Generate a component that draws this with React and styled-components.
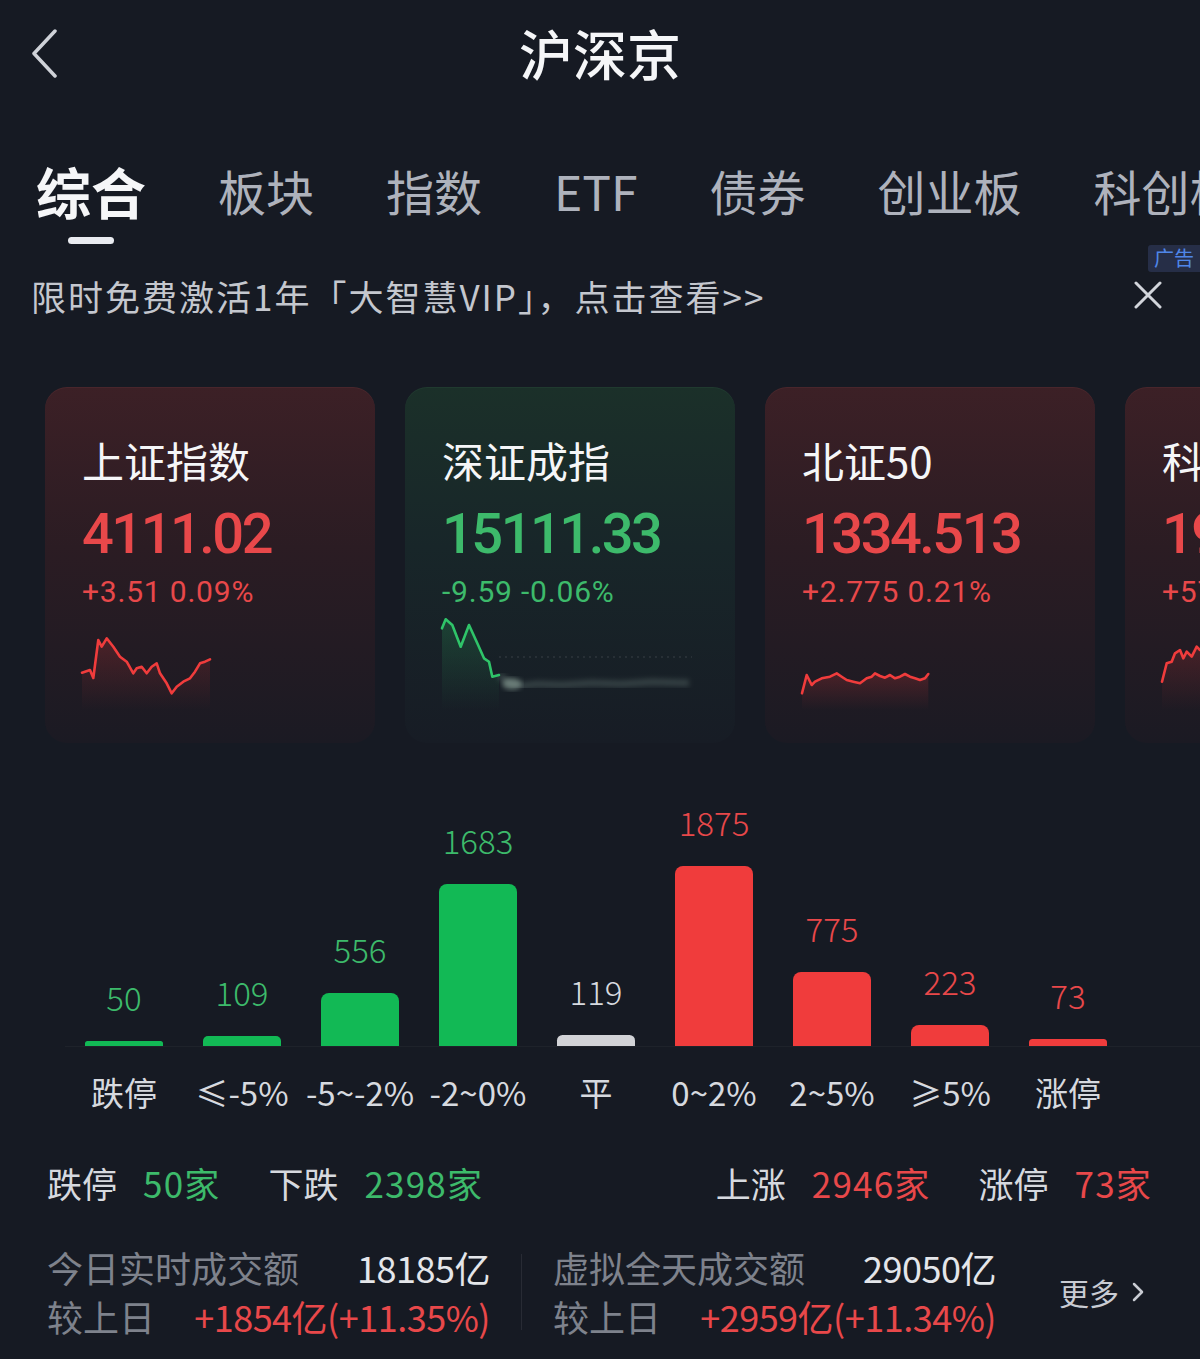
import React from 'react';
import styled, { createGlobalStyle } from 'styled-components';

const COLORS = {
    bg: '#161a23',
    white: '#f5f6f8',
    text: '#d6d9df',
    tab: '#aeb2bc',
    gray: '#7e828c',
    red: '#f03c3c',
    redText: '#e8484a',
    green: '#12b955',
    greenText: '#3dba6b',
    flat: '#d2d3d7',
};

const FONT = `"Noto Sans CJK SC", "Noto Sans", sans-serif`;
const NUM_FONT = `Roboto, "Noto Sans CJK SC", sans-serif`;

const TABS = ['综合', '板块', '指数', 'ETF', '债券', '创业板', '科创板'];

const INDEXES = [
    {
        id: 'sh',
        name: '上证指数',
        value: '4111.02',
        change: '+3.51 0.09%',
        tone: 'up',
        points: [[0,62.7],[8,60],[11.3,68],[16.3,30],[19.7,36.7],[24.7,28.3],[31.3,36.7],[38,46.7],[44.7,51.7],[51.3,63.3],[54.7,58.3],[59.7,56.7],[64.7,63.3],[69.7,56.7],[74.7,53.3],[78,63.3],[84.7,73.3],[89.7,83.3],[94.7,76.7],[101.3,71.7],[108,68.3],[113,61.7],[118,53.3],[123,51.7],[128,49.3]],
    },
    {
        id: 'sz',
        name: '深证成指',
        value: '15111.33',
        change: '-9.59 -0.06%',
        tone: 'down',
        points: [[0,18.3],[3.7,9.3],[10.3,15],[18.7,36.7],[27,15],[35.3,33.3],[42,48.3],[47,51.7],[50.3,66.7],[57,65]],
        tail: [[57,65],[67,73],[80,76],[95,74],[120,75],[150,73],[180,74],[210,72],[247,73]],
    },
    {
        id: 'bj',
        name: '北证50',
        value: '1334.513',
        change: '+2.775 0.21%',
        tone: 'up',
        points: [[0,83.3],[4.7,65],[9.7,75],[13,71.7],[19.7,68.3],[28,66.7],[34.7,63.3],[39.7,66.7],[44.7,70],[51.3,71.7],[58,73.3],[64.7,68.3],[69.7,66.7],[73,63.3],[78,66],[83,67.7],[88,65],[93,68.3],[98,66.7],[103,64],[108,66.7],[113,68.3],[118,70],[123,68.3],[126.3,64]],
    },
    {
        id: 'kc',
        name: '科创50',
        value: '1921.46',
        change: '+57.26 3.07%',
        tone: 'up',
        points: [[0,71.7],[4.7,53.3],[9.7,51.7],[13,43.3],[18,40],[21.3,48.3],[24.7,41.7],[29.7,46.7],[34.7,36.7],[38,40],[44,35],[50,42],[58,30],[66,38],[74,28],[82,36],[90,32],[100,40],[110,34],[120,38],[128,30]],
    },
];

const BARS = [
    { label: '跌停', value: 50, tone: 'down' },
    { label: '≤-5%', value: 109, tone: 'down' },
    { label: '-5~-2%', value: 556, tone: 'down' },
    { label: '-2~0%', value: 1683, tone: 'down' },
    { label: '平', value: 119, tone: 'flat' },
    { label: '0~2%', value: 1875, tone: 'up' },
    { label: '2~5%', value: 775, tone: 'up' },
    { label: '≥5%', value: 223, tone: 'up' },
    { label: '涨停', value: 73, tone: 'up' },
];

const toneText = (tone) =>
    tone === 'up' ? COLORS.redText : tone === 'down' ? COLORS.greenText : COLORS.text;
const toneBar = (tone) =>
    tone === 'up' ? COLORS.red : tone === 'down' ? COLORS.green : COLORS.flat;

const GlobalStyle = createGlobalStyle`
    * { box-sizing: border-box; }
    body {
        margin: 0;
        background: ${COLORS.bg};
        font-family: ${FONT};
        -webkit-font-smoothing: antialiased;
    }
`;

const Page = styled.div`
    width: 1200px;
    height: 1359px;
    overflow: hidden;
    background: ${COLORS.bg};
    color: ${COLORS.text};
`;

const Header = styled.header`
    height: 105px;
    display: grid;
    grid-template-columns: 120px 1fr 120px;
    align-items: center;
`;

const BackButton = styled.div`
    padding-left: 30px;
    display: flex;
    align-items: center;
`;

const Title = styled.h1`
    margin: 0;
    text-align: center;
    font-size: 54px;
    font-weight: 500;
    line-height: 105px;
    color: ${COLORS.white};
`;

const TabBar = styled.nav`
    height: 140px;
    padding: 55px 0 0 36px;
    display: flex;
    gap: 72px;
    white-space: nowrap;
    overflow: hidden;
`;

const Tab = styled.div`
    display: flex;
    flex-direction: column;
    align-items: center;
    flex-shrink: 0;
    font-size: ${(p) => (p.$active ? '55px' : '48px')};
    font-weight: ${(p) => (p.$active ? 700 : 400)};
    color: ${(p) => (p.$active ? COLORS.white : COLORS.tab)};
    line-height: 60px;
`;

const Indicator = styled.span`
    width: 46px;
    height: 7px;
    margin-top: 17px;
    border-radius: 4px;
    background: ${(p) => (p.$visible ? '#e9ebf0' : 'transparent')};
`;

const Banner = styled.div`
    position: relative;
    height: 100px;
    padding: 0 38px 0 31px;
    display: flex;
    align-items: center;
    justify-content: space-between;
`;

const BannerText = styled.span`
    font-size: 35px;
    color: #c4c7ce;
    letter-spacing: 2px;
    white-space: nowrap;
`;

const AdTag = styled.span`
    position: absolute;
    top: 0;
    right: 0;
    padding: 1px 6px 2px;
    font-size: 20px;
    line-height: 24px;
    color: #4f86e8;
    background: #262e47;
    border-radius: 3px 0 0 3px;
`;

const CardRow = styled.div`
    margin-top: 42px;
    padding-left: 45px;
    display: flex;
    gap: 30px;
    overflow: hidden;
`;

const Card = styled.div`
    flex-shrink: 0;
    width: 330px;
    height: 356px;
    padding: 48px 37px 0;
    border-radius: 22px;
    background: ${(p) =>
        p.$tone === 'down'
            ? 'linear-gradient(180deg, #1b3029 0%, #182629 45%, #171c25 100%)'
            : 'linear-gradient(180deg, #3c2026 0%, #2b1c23 45%, #1b1a23 100%)'};
    box-shadow: inset 0 1px 0 ${(p) =>
        p.$tone === 'down' ? 'rgba(120, 220, 160, 0.06)' : 'rgba(255, 130, 130, 0.07)'};
`;

const CardName = styled.div`
    font-size: 42px;
    line-height: 50px;
    color: ${COLORS.white};
    white-space: nowrap;
`;

const CardValue = styled.div`
    margin-top: 16px;
    font-family: ${NUM_FONT};
    font-size: 56px;
    font-weight: 500;
    letter-spacing: -2.5px;
    line-height: 66px;
    color: ${(p) => (p.$tone === 'down' ? COLORS.greenText : COLORS.redText)};
    white-space: nowrap;
`;

const CardChange = styled.div`
    margin-top: 7px;
    font-family: ${NUM_FONT};
    font-size: 30px;
    letter-spacing: 0.8px;
    line-height: 36px;
    color: ${(p) => (p.$tone === 'down' ? COLORS.greenText : COLORS.redText)};
    white-space: nowrap;
`;

const Spark = styled.svg`
    display: block;
    overflow: visible;
`;

const Chart = styled.section`
    padding-left: 65px;
`;

const BarsRow = styled.div`
    height: 304px;
    display: flex;
    align-items: flex-end;
    border-bottom: 1px solid rgba(255, 255, 255, 0.035);
`;

const BarColumn = styled.div`
    width: 118px;
    display: flex;
    flex-direction: column;
    align-items: center;
`;

const BarValue = styled.div`
    margin-bottom: 24px;
    font-size: 33px;
    line-height: 40px;
    font-weight: 300;
    color: ${(p) => toneText(p.$tone)};
`;

const Bar = styled.div`
    width: 78px;
    background: ${(p) => toneBar(p.$tone)};
`;

const LabelsRow = styled.div`
    margin-top: 22px;
    display: flex;
`;

const BarLabel = styled.div`
    width: 118px;
    text-align: center;
    font-size: 33px;
    line-height: 46px;
    color: ${COLORS.text};
    white-space: nowrap;
`;

const Summary = styled.div`
    margin-top: 43px;
    padding: 0 48px 0 47px;
    display: flex;
    justify-content: space-between;
    font-size: 35px;
    line-height: 50px;
`;

const SummaryGroup = styled.div`
    display: flex;
    gap: 48px;
`;

const SummaryItem = styled.div`
    display: flex;
    gap: 26px;
`;

const SummaryLabel = styled.span`
    color: ${COLORS.text};
`;

const SummaryValue = styled.span`
    color: ${(p) => toneText(p.$tone)};
    letter-spacing: 1.2px;
`;

const Stats = styled.div`
    margin-top: 35px;
    padding-left: 47px;
    display: flex;
    align-items: center;
`;

const StatBlock = styled.div`
    width: 443px;
    display: grid;
    grid-template-rows: 49px 49px;
`;

const StatRow = styled.div`
    display: flex;
    justify-content: space-between;
    align-items: center;
    font-size: 36px;
    line-height: 49px;
`;

const StatLabel = styled.span`
    color: ${COLORS.gray};
`;

const StatValue = styled.span`
    color: ${(p) => (p.$tone === 'up' ? COLORS.redText : '#e4e6ea')};
    letter-spacing: -0.5px;
`;

const Divider = styled.div`
    width: 1px;
    height: 76px;
    margin: 0 31px;
    background: rgba(255, 255, 255, 0.08);
`;

const MoreLink = styled.div`
    margin-left: 63px;
    display: flex;
    align-items: center;
    gap: 12px;
    font-size: 30px;
    color: #c9ccd3;
`;

const ChevronLeft = () => (
    <svg width="30" height="50" viewBox="0 0 30 50">
        <polyline points="25,3 4,25.5 25,48" fill="none" stroke="#cfd2d8" strokeWidth="3.5" strokeLinecap="round" strokeLinejoin="round" />
    </svg>
);

const CloseIcon = () => (
    <svg width="28" height="28" viewBox="0 0 28 28">
        <path d="M2 2 L26 26 M26 2 L2 26" stroke="#d2d5db" strokeWidth="3" strokeLinecap="round" />
    </svg>
);

const ChevronRight = () => (
    <svg width="14" height="22" viewBox="0 0 14 22">
        <polyline points="3,3 11,11 3,19" fill="none" stroke="#c9ccd3" strokeWidth="2.5" strokeLinecap="round" strokeLinejoin="round" />
    </svg>
);

const Sparkline = ({ id, points, tail, color }) => {
    const line = points.map((p) => p.join(',')).join(' ');
    const first = points[0];
    const last = points[points.length - 1];
    const area = `${first[0]},100 ${line} ${last[0]},100`;
    return (
        <Spark width="256" height="100" viewBox="0 0 256 100">
            <defs>
                <linearGradient id={`fill-${id}`} x1="0" y1="0" x2="0" y2="1">
                    <stop offset="0" stopColor={color} stopOpacity="0.2" />
                    <stop offset="1" stopColor={color} stopOpacity="0" />
                </linearGradient>
                <filter id={`blur-${id}`}>
                    <feGaussianBlur stdDeviation="2.5" />
                </filter>
            </defs>
            <polygon points={area} fill={`url(#fill-${id})`} />
            {tail && (
                <>
                    <line x1="57" y1="47" x2="250" y2="47" stroke="rgba(255,255,255,0.07)" strokeWidth="2" strokeDasharray="2 4" />
                    <polyline
                        points={tail.map((p) => p.join(',')).join(' ')}
                        fill="none"
                        stroke="rgba(200,230,210,0.16)"
                        strokeWidth="7"
                        strokeLinejoin="round"
                        filter={`url(#blur-${id})`}
                    />
                    <ellipse cx="70" cy="74" rx="10" ry="6" fill="rgba(210,240,220,0.35)" filter={`url(#blur-${id})`} />
                </>
            )}
            <polyline points={line} fill="none" stroke={color} strokeWidth="2.6" strokeLinejoin="round" strokeLinecap="round" />
        </Spark>
    );
};

const MAX_BAR = 180;
const maxValue = Math.max(...BARS.map((b) => b.value));

const App = () => {
    return (
        <Page>
            <GlobalStyle />
            <Header>
                <BackButton>
                    <ChevronLeft />
                </BackButton>
                <Title>沪深京</Title>
                <div />
            </Header>

            <TabBar>
                {TABS.map((tab, i) => (
                    <Tab key={tab} $active={i === 0}>
                        {tab}
                        <Indicator $visible={i === 0} />
                    </Tab>
                ))}
            </TabBar>

            <Banner>
                <BannerText>限时免费激活1年「大智慧VIP」，点击查看&gt;&gt;</BannerText>
                <CloseIcon />
                <AdTag>广告</AdTag>
            </Banner>

            <CardRow>
                {INDEXES.map((idx) => (
                    <Card key={idx.id} $tone={idx.tone}>
                        <CardName>{idx.name}</CardName>
                        <CardValue $tone={idx.tone}>{idx.value}</CardValue>
                        <CardChange $tone={idx.tone}>{idx.change}</CardChange>
                        <Sparkline
                            id={idx.id}
                            points={idx.points}
                            tail={idx.tail}
                            color={idx.tone === 'down' ? '#2fc469' : '#f03c3c'}
                        />
                    </Card>
                ))}
            </CardRow>

            <Chart>
                <BarsRow>
                    {BARS.map((bar) => {
                        const h = Math.max(4, Math.round((bar.value / maxValue) * MAX_BAR));
                        const r = Math.min(8, h / 2);
                        return (
                            <BarColumn key={bar.label}>
                                <BarValue $tone={bar.tone}>{bar.value}</BarValue>
                                <Bar
                                    $tone={bar.tone}
                                    style={{ height: h, borderRadius: `${r}px ${r}px 0 0` }}
                                />
                            </BarColumn>
                        );
                    })}
                </BarsRow>
                <LabelsRow>
                    {BARS.map((bar) => (
                        <BarLabel key={bar.label}>{bar.label}</BarLabel>
                    ))}
                </LabelsRow>
            </Chart>

            <Summary>
                <SummaryGroup>
                    <SummaryItem>
                        <SummaryLabel>跌停</SummaryLabel>
                        <SummaryValue $tone='down'>50家</SummaryValue>
                    </SummaryItem>
                    <SummaryItem>
                        <SummaryLabel>下跌</SummaryLabel>
                        <SummaryValue $tone='down'>2398家</SummaryValue>
                    </SummaryItem>
                </SummaryGroup>
                <SummaryGroup>
                    <SummaryItem>
                        <SummaryLabel>上涨</SummaryLabel>
                        <SummaryValue $tone='up'>2946家</SummaryValue>
                    </SummaryItem>
                    <SummaryItem>
                        <SummaryLabel>涨停</SummaryLabel>
                        <SummaryValue $tone='up'>73家</SummaryValue>
                    </SummaryItem>
                </SummaryGroup>
            </Summary>

            <Stats>
                <StatBlock>
                    <StatRow>
                        <StatLabel>今日实时成交额</StatLabel>
                        <StatValue>18185亿</StatValue>
                    </StatRow>
                    <StatRow>
                        <StatLabel>较上日</StatLabel>
                        <StatValue $tone='up'>+1854亿(+11.35%)</StatValue>
                    </StatRow>
                </StatBlock>
                <Divider />
                <StatBlock>
                    <StatRow>
                        <StatLabel>虚拟全天成交额</StatLabel>
                        <StatValue>29050亿</StatValue>
                    </StatRow>
                    <StatRow>
                        <StatLabel>较上日</StatLabel>
                        <StatValue $tone='up'>+2959亿(+11.34%)</StatValue>
                    </StatRow>
                </StatBlock>
                <MoreLink>
                    更多
                    <ChevronRight />
                </MoreLink>
            </Stats>
        </Page>
    );
};

export default App;
